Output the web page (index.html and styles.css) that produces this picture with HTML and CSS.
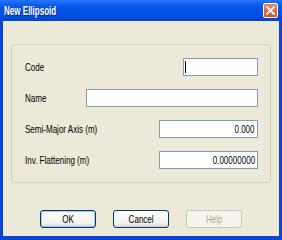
FILE: index.html
```html
<!DOCTYPE html>
<html lang="en">

<head>
  <meta charset="UTF-8">
  <title>New Ellipsoid</title>
  <link rel="stylesheet" href="styles.css">
</head>

<body>
  <div class="window">
    <!-- title bar -->
    <div class="titlebar">
      <span class="title txt">New Ellipsoid</span>
      <span class="close">
        <svg width="9" height="9" viewBox="0 0 9 9">
          <path d="M1 1 L8 8 M8 1 L1 8" stroke="#fff" stroke-width="1.8" stroke-linecap="square" fill="none"/>
        </svg>
      </span>
    </div>
    <!-- dialog body -->
    <div class="body">
      <div class="group">
        <div class="row">
          <span class="label txt">Code</span>
          <div class="field field-code"><span class="caret"></span></div>
        </div>
        <div class="row">
          <span class="label txt">Name</span>
          <div class="field field-name"></div>
        </div>
        <div class="row">
          <span class="label txt">Semi-Major Axis (m)</span>
          <div class="field field-num"><span class="txt txt-right">0.000</span></div>
        </div>
        <div class="row">
          <span class="label txt">Inv. Flattening (m)</span>
          <div class="field field-num"><span class="txt txt-right">0.00000000</span></div>
        </div>
      </div>
      <div class="buttons">
        <button class="btn btn-default"><span class="txt txt-center">OK</span></button>
        <button class="btn"><span class="txt txt-center">Cancel</span></button>
        <button class="btn" disabled><span class="txt txt-center">Help</span></button>
      </div>
    </div>
  </div>
</body>

</html>
```

FILE: styles.css
```css
/* reset start */
body {
  margin: 0;
  font-family: "Liberation Sans", Arial, sans-serif;
  font-size: 11px;
}

/* narrow dialog lettering */
.txt {
  display: inline-block;
  transform: scaleX(0.73);
  transform-origin: left center;
  white-space: nowrap;
}

.txt-right {
  transform-origin: right center;
}

.txt-center {
  transform-origin: center center;
}

/* reset end */

/* window start */
.window {
  width: 282px;
  height: 240px;
  box-sizing: border-box;
  padding: 0 3px 4px 3px;
  background: #0B44D6;
  display: flex;
  flex-direction: column;
}

.titlebar {
  height: 21px;
  display: flex;
  align-items: center;
  justify-content: space-between;
  margin: 0 -3px;
  padding: 0 4px 0 4px;
  background: linear-gradient(#2A74F8, #0258E8 30%, #0150DE 70%, #0045D0);
}

.title {
  color: #ffffff;
  font-weight: bold;
  font-size: 12px;
  transform: scaleX(0.67);
  text-shadow: 1px 1px 0 #0A2A8A;
}

.close {
  width: 13px;
  height: 13px;
  display: flex;
  align-items: center;
  justify-content: center;
  border: 1px solid #ffffff;
  border-radius: 2px;
  background: linear-gradient(#E88A64, #D8522A);
}

/* window end */

/* body start */
.body {
  flex: 1;
  background: #ECE9D8;
  padding: 23px 8px 0 8px;
}

.group {
  height: 139px;
  box-sizing: border-box;
  border: 1px solid #D0D0BF;
  border-radius: 3px;
  padding: 13px 12px 0 13px;
  display: flex;
  flex-direction: column;
  gap: 13px;
}

.row {
  height: 18px;
  display: flex;
  align-items: center;
}

.label {
  color: #000000;
}

.field {
  height: 18px;
  box-sizing: border-box;
  margin-left: auto;
  border: 1px solid #7F9DB9;
  background: #ffffff;
  padding: 0 2px;
  display: flex;
  align-items: center;
  justify-content: flex-end;
  font-size: 11px;
}

.field-code {
  width: 75px;
  justify-content: flex-start;
  padding-left: 1px;
}

.field-name {
  width: 172px;
}

.field-num {
  width: 99px;
}

.caret {
  width: 1px;
  height: 12px;
  background: #000000;
}

/* body end */

/* buttons start */
.buttons {
  display: flex;
  justify-content: center;
  gap: 17px;
  margin-top: 27px;
}

.btn {
  width: 56px;
  height: 18px;
  padding: 0;
  border: 1px solid #003C74;
  border-radius: 3px;
  background: linear-gradient(#FFFFFF, #F0F0EA 80%, #D6D0C5);
  font-family: inherit;
  font-size: 11px;
  color: #000000;
}

.btn-default {
  box-shadow: inset 0 0 0 1px #A8C4F0;
}

.btn:disabled {
  border-color: #C9C7BA;
  background: #F5F4EA;
  color: #ACA899;
}

/* buttons end */
```
